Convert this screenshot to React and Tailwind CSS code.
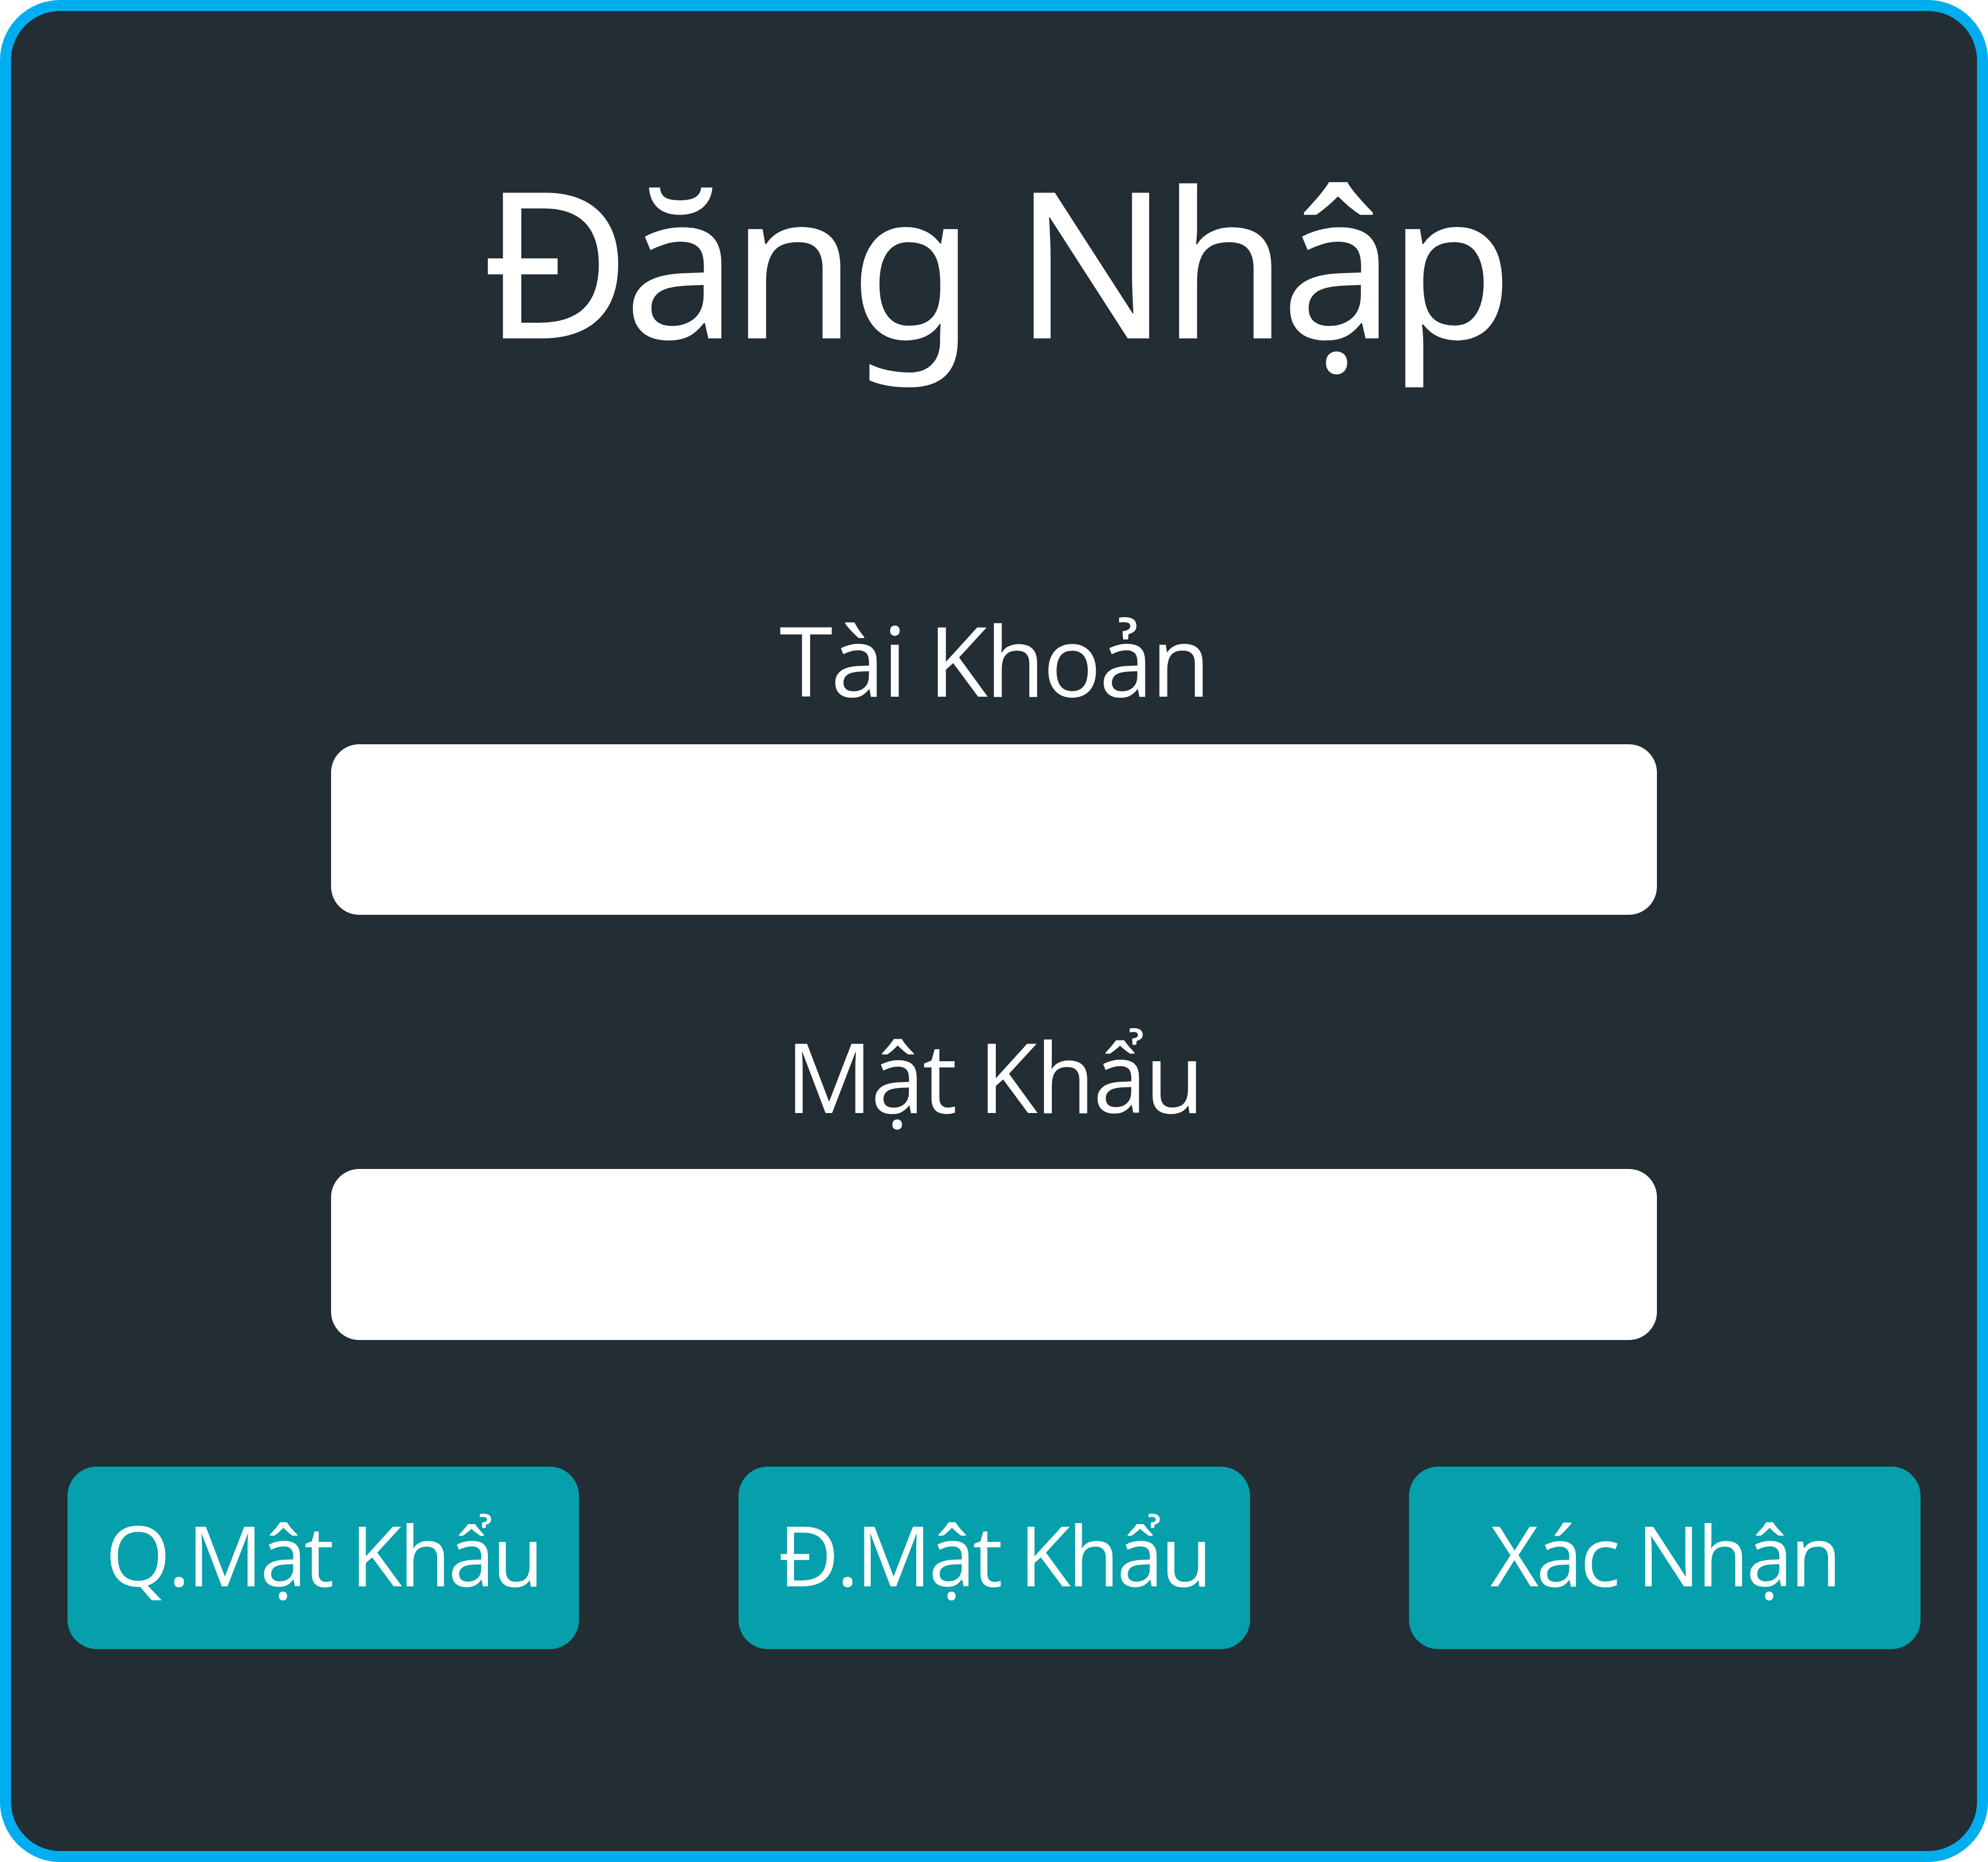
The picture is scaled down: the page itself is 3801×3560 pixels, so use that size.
export default function App() {
  const buttons = ["Q.Mật Khẩu", "Đ.Mật Khẩu", "Xác Nhận"];

  return (
    <div className="w-[3801px] h-[3560px] bg-white">
      <div className="w-full h-full rounded-[115px] border-[21px] border-[#00AEEF] bg-[#222D34] flex flex-col items-center text-white font-['Open_Sans',sans-serif]">
        {/* Title */}
        <h1 className="mt-[280px] text-[390px] leading-none tracking-[-0.035em] font-normal font-['Noto_Sans',sans-serif]">
          Đăng Nhập
        </h1>

        {/* Account */}
        <label className="mt-[477px] text-[185px] leading-none tracking-[-0.02em]">Tài Khoản</label>
        <input className="mt-[70px] w-[2535px] h-[326px] rounded-[54px] bg-white outline-none px-16 text-[150px] text-black" />

        {/* Password */}
        <label className="mt-[215px] text-[185px] leading-none tracking-[-0.02em]">Mật Khẩu</label>
        <input
          type="password"
          className="mt-[86px] w-[2535px] h-[327px] rounded-[54px] bg-white outline-none px-16 text-[150px] text-black"
        />

        {/* Actions */}
        <div className="mt-[242px] w-[3543px] flex justify-between">
          {buttons.map((b) => (
            <button
              key={b}
              className="w-[978px] h-[349px] rounded-[56px] bg-[#05A0AB] flex items-center justify-center pb-[16px] text-[160px] leading-none tracking-[-0.03em] text-white"
            >
              {b}
            </button>
          ))}
        </div>
      </div>
    </div>
  );
}
